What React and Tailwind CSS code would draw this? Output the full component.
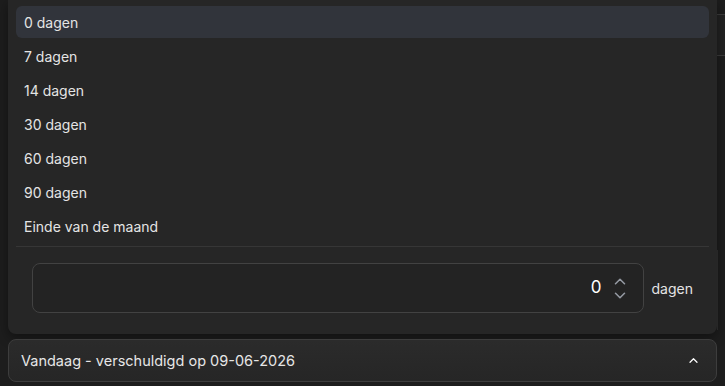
const options = ["0 dagen", "7 dagen", "14 dagen", "30 dagen", "60 dagen", "90 dagen", "Einde van de maand"];

const Chevron = ({ up, className }) => (
  <svg viewBox="0 0 12 8" className={className} fill="none" stroke="currentColor" strokeWidth="1.4" strokeLinecap="round" strokeLinejoin="round">
    {up ? <path d="M2 6l4-4 4 4" /> : <path d="M2 2l4 4 4-4" />}
  </svg>
);

export default function App() {
  return (
    <div
      className="relative h-[386px] w-[725px] overflow-hidden bg-[#1d1d1d] text-[#e4e4e4]"
      style={{ fontFamily: "Inter, 'Noto Sans', sans-serif" }}
    >
      {/* field peeking out from behind the popover */}
      <div className="absolute right-[-40px] top-[14px] h-[42px] w-[100px] rounded-lg border border-[#3c3c3c] bg-[#222]" />
      <div className="absolute right-0 top-[250px] h-[80px] w-[8px] border-l border-[#303030]" />

      <div className="relative flex flex-col px-2">
        <div className="rounded-b-lg bg-[#262626] px-2 pt-1.5 pb-[21px] shadow-[0_4px_12px_rgba(0,0,0,0.4)]">
          <ul className="flex flex-col gap-0.5">
            {options.map((o, i) => (
              <li
                key={o}
                className={`flex h-8 items-center rounded-md px-2 text-[14px] ${
                  i === 0 ? "bg-[#31343b]" : ""
                }`}
              >
                {o}
              </li>
            ))}
          </ul>
          <div className="mt-1 border-t border-[#363636]" />
          <div className="mt-4 flex items-center gap-2 px-4">
            <div className="flex h-[50px] flex-1 items-center justify-end gap-[11px] rounded-lg border border-[#424242] bg-[#232323] pr-[16px]">
              <span className="text-[17px] text-white">0</span>
              <div className="flex flex-col gap-[5px] text-[#959aa3]">
                <Chevron up className="h-[9px] w-[14px]" />
                <Chevron className="h-[9px] w-[14px]" />
              </div>
            </div>
            <span className="text-[14px]">dagen</span>
          </div>
        </div>

        <button className="mt-[5px] flex h-[43px] items-center justify-between rounded-lg border border-[#3d3d3d] bg-gradient-to-b from-[#2b2b2b] to-[#262626] pl-3 pr-[17px] text-left text-[14.5px] text-[#e6e6e6]">
          <span>Vandaag - verschuldigd op 09-06-2026</span>
          <Chevron up className="h-[7px] w-[11px] text-white" />
        </button>
      </div>
    </div>
  );
}
